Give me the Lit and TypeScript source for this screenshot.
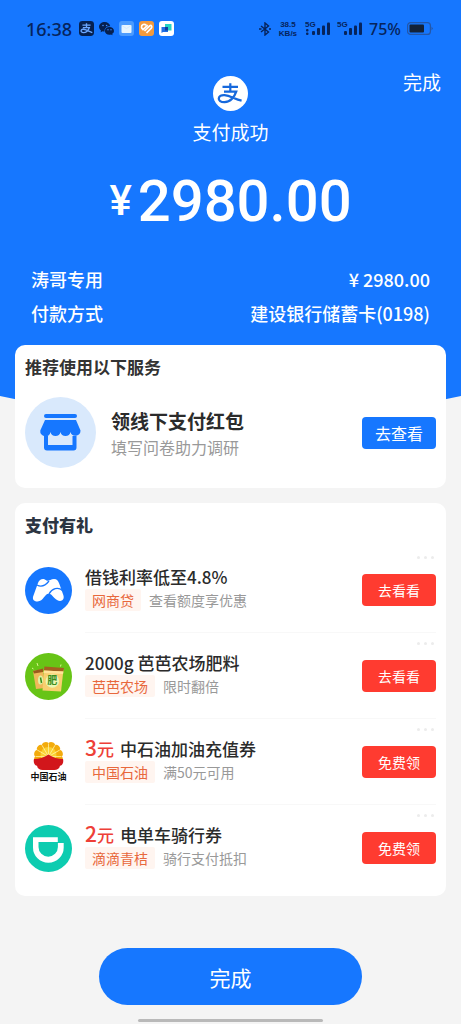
import { LitElement, html, svg, css, nothing } from "lit";
import { customElement, property } from "lit/decorators.js";

interface Gift {
  icon: unknown;
  amount?: string;
  title: string;
  tag: string;
  note: string;
  action: string;
}

const alipayMark = svg`
  <g fill="none" stroke="currentColor">
    <path d="M9.5 10.800H25M17.300 7.200V15.400" stroke-width="2.200"/>
    <path d="M11 15.600H23.200C21.600 20.400 17.600 26 11.600 26.200C7.600 26.300 5.600 24.400 5.800 22.400C6 20.200 8.600 18.900 11.600 19.100C17.400 19.500 21.600 23.200 28.600 24.600" stroke-width="2.300"/>
  </g>`;

const alipayLogo = html`
  <svg width="35" height="35" viewBox="0 0 35 35" role="img" aria-label="支付宝">
    <circle cx="17.500" cy="17.500" r="17.500" fill="#fff"/>
    <g color="#1668dc">${alipayMark}</g>
  </svg>`;

const shopIcon = html`
  <svg width="71" height="71" viewBox="0 0 71 71" aria-hidden="true">
    <circle cx="35.500" cy="35.500" r="35.500" fill="#d9e9fc"/>
    <g fill="#1677ff">
      <rect x="19" y="17" width="33" height="4" rx="2"/>
      <path d="M20 23H51L55.500 33.500A5.100 5.100 0 0 1 45.500 35A5.100 5.100 0 0 1 35.500 35A5.100 5.100 0 0 1 25.500 35A5.100 5.100 0 0 1 15.300 33.500Z"/>
      <path d="M19 39H23V48H47.500V39H51.500V50.500A3 3 0 0 1 48.500 53.500H22A3 3 0 0 1 19 50.500Z"/>
    </g>
  </svg>`;

const loanIcon = html`
  <svg width="47" height="47" viewBox="0 0 47 47" aria-hidden="true">
    <circle cx="23.500" cy="23.500" r="23.500" fill="#1677ff"/>
    <path d="M8.300 29L13 16C14.500 11.500 19 10.800 21.500 13.500C23.500 14.800 25.500 12 29 12C32 12 33.200 14 34.200 16.500L38.300 28C40 33 36 35.300 32 33C28 30.500 27 26.800 23.500 26.800C19.500 26.800 18.500 34.500 12.500 34.500C8.500 34.500 7.200 32 8.300 29Z" fill="#fff"/>
    <path d="M12 18C16 20.300 20.500 18.500 24 14M24 27C27 21.500 33 19.500 37.500 23.500" fill="none" stroke="#1677ff" stroke-width="1.300"/>
  </svg>`;

const farmIcon = html`
  <svg width="47" height="47" viewBox="0 0 47 47" aria-hidden="true">
    <circle cx="23.500" cy="23.500" r="23.500" fill="#67c416"/>
    <path d="M8 18L18 16L20 35L11 36Z" fill="#efb85a"/>
    <path d="M8 18L18 15.500V19L9 20.500Z" fill="#9a5a1c"/>
    <ellipse cx="15.500" cy="27" rx="2.500" ry="4.500" fill="#dff3a4"/>
    <path d="M15.500 24.500L16.500 30" stroke="#3c8d1d" stroke-width="1.500"/>
    <path d="M19 15.500L38.500 16.500L36 38.500L17.500 37.500Z" fill="#f8cf6f"/>
    <path d="M19.500 13.500L39 15L38.300 18.500L18.700 17.500Z" fill="#a3611f"/>
    <path d="M19 17.500L38.500 18.500L38 21L18.500 20Z" fill="#ffe39a"/>
    <circle cx="27.300" cy="28" r="6.800" fill="#e9f7b2"/>
    <text x="27.300" y="31.300" text-anchor="middle" font-size="10" font-weight="700" fill="#3c8d1d">肥</text>
    <path d="M12 10L13 13M36 11.500L35.500 13.500M7 15L8.500 16" stroke="#d8f58c" stroke-width="1"/>
  </svg>`;

const petals = [-105, -75, -45, -15, 15, 45, 75, 105];
const rays = [-90, -60, -30, 0, 30, 60, 90];
const oilIcon = html`
  <svg width="47" height="47" viewBox="0 0 47 47" aria-hidden="true">
    <g fill="#f3ab0c">
      ${petals.map((a) => svg`<path d="M23.500 17.500L19.500 6A4.100 4.100 0 0 1 27.500 6Z" transform="rotate(${a} 23.500 17.500)"/>`)}
    </g>
    <circle cx="23.500" cy="16" r="8" fill="#fbd132"/>
    <g stroke="#fff0a0" stroke-width=".8">
      ${rays.map((a) => svg`<path d="M23.500 17.500V4.500" transform="rotate(${a} 23.500 17.500)"/>`)}
    </g>
    <path d="M9 20C14 20 19 18.500 23.500 15.500C28 18.500 33 20 38 20C39 24 37 26.500 35 26.800C34.500 30 31.500 31.200 28.700 31H18.300C15.500 31.200 12.500 30 12 26.800C10 26.500 8 24 9 20Z" fill="#d2161b"/>
    <text x="23.500" y="41" text-anchor="middle" font-size="9" font-weight="700" fill="#111">中国石油</text>
  </svg>`;

const bikeIcon = html`
  <svg width="47" height="47" viewBox="0 0 47 47" aria-hidden="true">
    <circle cx="23.500" cy="23.500" r="23.500" fill="#0dccb0"/>
    <path d="M8 12.200H32.800V17H13.500V22A9.700 9.700 0 0 0 32.900 22V18H38.700V22.500A15.350 15.350 0 0 1 8 22.500Z" fill="#fff"/>
  </svg>`;

const gifts: Gift[] = [
  { icon: loanIcon, title: "借钱利率低至4.8%", tag: "网商贷", note: "查看额度享优惠", action: "去看看" },
  { icon: farmIcon, title: "2000g 芭芭农场肥料", tag: "芭芭农场", note: "限时翻倍", action: "去看看" },
  { icon: oilIcon, amount: "3元", title: "中石油加油充值券", tag: "中国石油", note: "满50元可用", action: "免费领" },
  { icon: bikeIcon, amount: "2元", title: "电单车骑行券", tag: "滴滴青桔", note: "骑行支付抵扣", action: "免费领" },
];

@customElement("status-bar")
export class StatusBar extends LitElement {
  static styles = css`
    :host {
      display: flex;
      align-items: center;
      justify-content: space-between;
      height: 57px;
      padding: 0 28px 0 26px;
      box-sizing: border-box;
      color: #06245c;
    }
    .side { display: flex; align-items: center; gap: 5px; }
    .right { gap: 6px; }
    .time { font-size: 18px; font-weight: 500; font-family: "Noto Sans", sans-serif; margin-right: 2px; }
    .speed { display: flex; flex-direction: column; align-items: center; font-size: 8px; line-height: 9px; font-weight: 700; font-family: "Liberation Sans", sans-serif; margin: 0 2px; }
    .percent { font-size: 16px; font-weight: 500; font-family: "Noto Sans", sans-serif; }
    svg { display: block; }
    text { font-family: "Liberation Sans", sans-serif; }
  `;

  private signal(dots: number) {
    return html`
      <svg width="26" height="23" viewBox="0 0 26 23" fill="currentColor" aria-hidden="true">
        <text x="0" y="10" font-size="8" font-weight="700">5G</text>
        ${dots === 2 ? svg`<rect x="1" y="12" width="2.500" height="2.500" rx="1"/>` : nothing}
        ${dots === 2 ? svg`<rect x="1" y="15.500" width="2.500" height="2.500" rx="1"/>` : nothing}
        <rect x="7" y="14" width="3" height="4" rx="1"/>
        <rect x="12" y="11" width="3" height="7" rx="1"/>
        <rect x="17" y="8.500" width="3" height="9.500" rx="1"/>
        <rect x="22" y="5.500" width="3" height="12.500" rx="1"/>
      </svg>`;
  }

  render() {
    return html`
      <div class="side">
        <span class="time">16:38</span>
        <svg width="15" height="15" viewBox="0 0 35 35" aria-hidden="true">
          <rect width="35" height="35" rx="8" fill="#06204f"/>
          <g fill="none" stroke="#6aa6ff" stroke-width="3.200">
            <path d="M8 9.500H27M17.500 5V15M9 15.500H24C22 21 17 27 10.500 27C6 27 4.500 24.500 5 22C6 19 11 18.500 16 20.500L31 27"/>
          </g>
        </svg>
        <svg width="15" height="15" viewBox="0 0 15 15" aria-hidden="true">
          <path d="M5.800 1C2.600 1 0 3.100 0 5.800C0 7.300.8 8.600 2 9.500L1.600 11.300L3.600 10.300C4.300 10.500 5 10.600 5.600 10.600C5 7 8 5 11.300 5.200C10.800 2.800 8.500 1 5.800 1Z" fill="#06204f"/>
          <path d="M10.400 6C7.900 6 5.900 7.700 5.900 9.900C5.900 12 7.900 13.700 10.400 13.700C11 13.700 11.500 13.600 12 13.500L13.600 14.300L13.200 12.800C14.300 12.100 15 11.100 15 9.900C15 7.700 12.900 6 10.400 6Z" fill="#06204f"/>
          <g fill="#3f8cff"><circle cx="4" cy="4.500" r=".8"/><circle cx="7.600" cy="4.500" r=".8"/><circle cx="9" cy="8.800" r=".7"/><circle cx="12" cy="8.800" r=".7"/></g>
        </svg>
        <svg width="15" height="15" viewBox="0 0 15 15" aria-hidden="true">
          <rect width="15" height="15" rx="3" fill="#4a9bff"/>
          <rect x="2.500" y="4" width="10" height="8" rx="1" fill="#e6f5ff"/>
          <path d="M2.800 4.500L7.500 7.500L12.200 4.500" fill="none" stroke="#cfe6ff" stroke-width=".8"/>
        </svg>
        <svg width="15" height="15" viewBox="0 0 15 15" aria-hidden="true">
          <rect width="15" height="15" rx="3" fill="#f39a3d"/>
          <path d="M7.200 4.200C5.500 2.500 2.300 3.500 2.500 6.200C2.600 7.200 3.200 8 4 8.700L8.700 4.200M5.500 10L10.700 4.800C12.200 3.600 13.500 5.500 12.300 7.200L7.500 12" fill="none" stroke="#fff" stroke-width="1.700" stroke-linejoin="round"/>
        </svg>
        <svg width="15" height="15" viewBox="0 0 15 15" aria-hidden="true">
          <rect width="15" height="15" rx="3" fill="#fff"/>
          <path d="M6 3H12.500V9.500H6Z" fill="#25d3c5"/>
          <path d="M2.500 6H9V11H4L2.500 12Z" fill="#1f6fe5"/>
          <path d="M6 6H9V9.500H6Z" fill="#123f9c"/>
        </svg>
      </div>
      <div class="side right">
        <svg width="12" height="14" viewBox="0 0 12 14" fill="none" stroke="currentColor" stroke-width="1.400" aria-label="蓝牙" role="img">
          <path d="M2 4L9.500 10L6 13V1L9.500 4L2 10"/>
          <path d="M0 7H2.500M10 7H12" stroke-width="1.500"/>
        </svg>
        <span class="speed"><span>38.5</span><span>KB/s</span></span>
        ${this.signal(2)}${this.signal(1)}
        <span class="percent">75%</span>
        <svg width="26" height="13" viewBox="0 0 26 13" aria-hidden="true">
          <rect x=".6" y=".6" width="22.800" height="11.800" rx="3" fill="none" stroke="#2457a8" stroke-width="1.200"/>
          <rect x="2.500" y="2.500" width="14.500" height="8" rx="1" fill="#132238"/>
          <path d="M24.500 4.500V8.500L26 6.500Z" fill="#2457a8"/>
        </svg>
      </div>`;
  }
}

@customElement("gift-row")
export class GiftRow extends LitElement {
  @property({ attribute: false }) gift!: Gift;

  static styles = css`
    :host { display: flex; gap: 13px; height: 86px; }
    .icon { flex: none; padding-top: 20px; }
    svg { display: block; }
    text { font-family: "Noto Sans CJK SC", sans-serif; }
    .main {
      flex: 1;
      min-width: 0;
      display: flex;
      justify-content: space-between;
      border-bottom: 1px solid #f8f8f8;
    }
    :host(:last-of-type) .main { border-bottom-color: transparent; }
    .copy { padding-top: 18px; }
    .title { margin: 0; font-size: 17px; line-height: 24px; font-weight: 500; color: #2b2b2b; white-space: nowrap; display: flex; align-items: baseline; gap: 6px; }
    .amount { color: #ee3f38; line-height: 0; }
    .num { font-size: 21px; }
    .meta { display: flex; align-items: center; gap: 8px; margin: 0; font-size: 14px; line-height: 22px; color: #999; white-space: nowrap; }
    .tag { padding: 0 7px; background: #fff5f0; color: #e8683c; border-radius: 2px; }
    .actions { display: flex; flex-direction: column; align-items: flex-end; gap: 13px; padding-top: 9px; }
    .more { display: flex; gap: 4px; border: 0; background: none; padding: 0 2px 2px 0; height: 5px; cursor: pointer; }
    .more i { width: 3px; height: 3px; border-radius: 50%; background: #ececec; }
    .go { width: 74px; height: 32px; padding: 0; border: 0; border-radius: 4px; background: #ff3b30; color: #fff; font: inherit; font-size: 14px; cursor: pointer; }
  `;

  render() {
    const g = this.gift;
    return html`
      <div class="icon">${g.icon}</div>
      <div class="main">
        <div class="copy">
          <h3 class="title">
            ${g.amount ? html`<span class="amount"><span class="num">${g.amount[0]}</span>${g.amount.slice(1)}</span>` : nothing}
            <span>${g.title}</span>
          </h3>
          <p class="meta"><span class="tag">${g.tag}</span><span>${g.note}</span></p>
        </div>
        <div class="actions">
          <button class="more" type="button" aria-label="更多"><i></i><i></i><i></i></button>
          <button class="go" type="button">${g.action}</button>
        </div>
      </div>`;
  }
}

@customElement("app-root")
export class AppRoot extends LitElement {
  static styles = css`
    :host {
      display: block;
      min-height: 100vh;
      background: #f4f4f4;
      font-family: "Noto Sans CJK SC", sans-serif;
      color: #2b2b2b;
    }
    svg { display: block; }
    button { font: inherit; cursor: pointer; }
    .hero {
      background: #1677ff;
      color: #fff;
      padding-bottom: 90px;
      clip-path: ellipse(150% 100% at 50% 0);
    }
    .top { display: grid; grid-template-columns: 1fr auto 1fr; padding: 12px 20px 0; align-items: start; }
    .top svg { grid-column: 2; margin-top: 7px; }
    .done { justify-self: end; border: 0; background: none; padding: 0; color: #fff; font-size: 19px; line-height: 26px; }
    .state { margin: 7px 0 0; text-align: center; font-size: 19px; line-height: 28px; font-weight: 400; }
    .total { display: flex; justify-content: center; align-items: center; gap: 6px; margin: 21px 0 0; line-height: 68px; font-size: 58px; font-weight: 500; font-family: Roboto, sans-serif; }
    .total .yen { font-size: 42px; }
    .facts { margin: 27px 31px 0; font-size: 18px; line-height: 34px; font-weight: 500; }
    .fact { display: flex; justify-content: space-between; }
    .facts dd { margin: 0; display: flex; gap: 4px; }
    .cards { position: relative; margin: -75px 15px 0; display: flex; flex-direction: column; gap: 15px; }
    .card { background: #fff; border-radius: 10px; padding: 10px 10px 0; }
    .heading { margin: 0; font-size: 17px; line-height: 24px; font-weight: 700; color: #333; }
    .heading.gift { font-weight: 900; color: #2c3542; }
    .service { display: flex; align-items: center; gap: 15px; padding: 18px 0 20px; }
    .service .copy { flex: 1; }
    .service h3 { margin: 0; font-size: 19px; line-height: 28px; font-weight: 700; }
    .service p { margin: 0; font-size: 16px; line-height: 24px; color: #999; }
    .look { width: 74px; height: 32px; padding: 0; border: 0; border-radius: 4px; background: #1677ff; color: #fff; font-size: 16px; line-height: 30px; }
    .gifts { padding: 10px 0 5px; }
    .foot { display: flex; flex-direction: column; align-items: center; gap: 14px; padding: 52px 0 2px; }
    .finish { width: 57%; height: 57px; border: 0; border-radius: 29px; background: #1677ff; color: #fff; font-size: 21px; }
    .home { width: 40%; height: 3px; border-radius: 2px; background: #b9b9b9; }
  `;

  render() {
    return html`
      <header class="hero">
        <status-bar></status-bar>
        <div class="top">
          ${alipayLogo}
          <button class="done" type="button">完成</button>
        </div>
        <h1 class="state">支付成功</h1>
        <p class="total"><span class="yen">¥</span><span>2980.00</span></p>
        <dl class="facts">
          <div class="fact"><dt>涛哥专用</dt><dd><span>¥</span><span>2980.00</span></dd></div>
          <div class="fact"><dt>付款方式</dt><dd>建设银行储蓄卡(0198)</dd></div>
        </dl>
      </header>
      <main class="cards">
        <section class="card">
          <h2 class="heading">推荐使用以下服务</h2>
          <div class="service">
            ${shopIcon}
            <div class="copy">
              <h3>领线下支付红包</h3>
              <p>填写问卷助力调研</p>
            </div>
            <button class="look" type="button">去查看</button>
          </div>
        </section>
        <section class="card">
          <h2 class="heading gift">支付有礼</h2>
          <div class="gifts">
            ${gifts.map((g) => html`<gift-row .gift=${g}></gift-row>`)}
          </div>
        </section>
      </main>
      <footer class="foot">
        <button class="finish" type="button">完成</button>
        <div class="home"></div>
      </footer>`;
  }
}
